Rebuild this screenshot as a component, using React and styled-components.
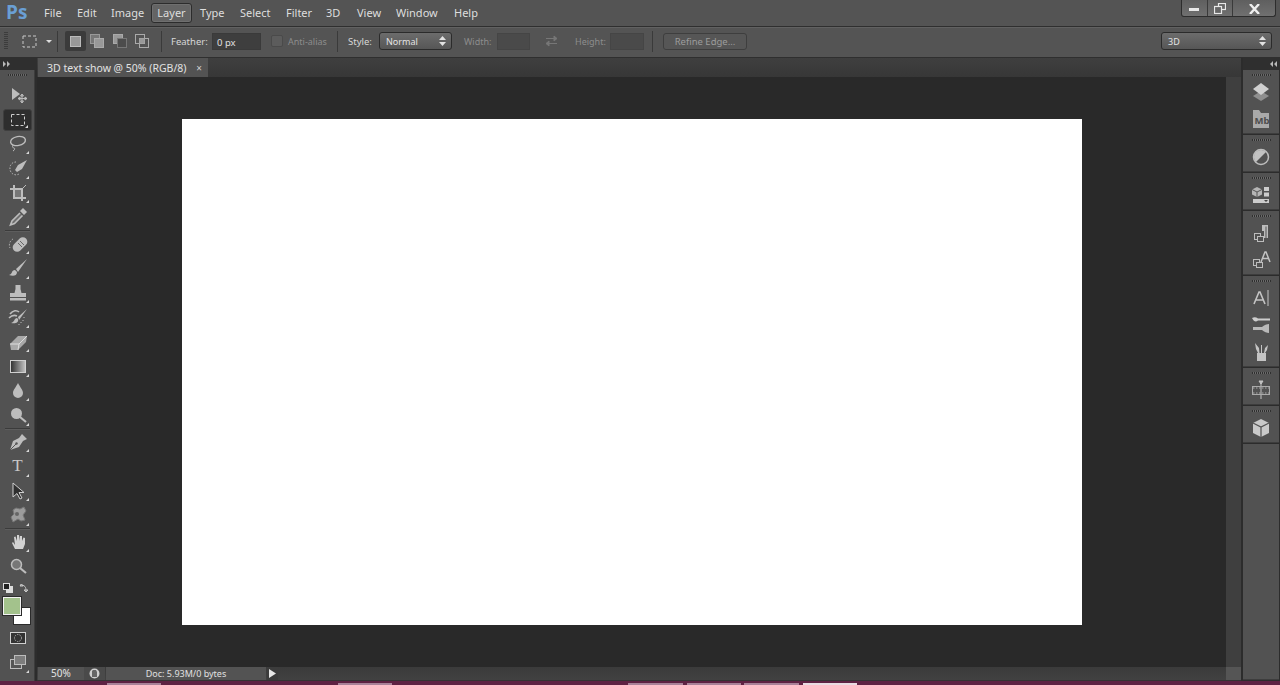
import React from 'react';
import styled, { createGlobalStyle } from 'styled-components';

const Global = createGlobalStyle`
  html, body { margin: 0; padding: 0; height: 100%; overflow: hidden; background: #535353; }
  #root { height: 100%; }
  * { box-sizing: border-box; }
`;
const Shell = styled.div`
  width: 1280px; height: 685px; display: grid; grid-template-rows: 27px 31px 1fr 4px;
  font-family: "Noto Sans", "Open Sans", sans-serif; font-size: 11px; color: #d6d6d6; background: #535353;
  overflow: hidden;
`;
const MenuBar = styled.header`
  display: flex; align-items: flex-start; background: #545454; border-bottom: 1px solid #2f2f2f; padding-left: 6px;
`;
const Logo = styled.div`
  width: 38px; height: 26px; font: bold 19px/25px "Open Sans", sans-serif; color: #6a9fd4;
`;
const MenuItem = styled.div`
  width: ${p => p.$w}px; height: 26px; line-height: 25px; font-size: 11px; color: #dedede; flex: none;
`;
const ActiveMenu = styled.div`
  width: 41px; height: 20px; margin: 3px 8px 0 -7px; line-height: 18px; text-align: center; font-size: 11px; color: #dedede; flex: none;
  background: #646464; border: 1px solid #2c2c2c; border-radius: 3px; box-shadow: inset 0 0 0 1px #6f6f6f;
`;
const WinControls = styled.div`
  margin-left: auto; margin-right: 4px; display: flex; height: 17px; width: 95px;
  border: 1px solid #2d2d2d; border-top: 0; border-radius: 0 0 3px 3px; overflow: hidden;
  background: linear-gradient(#5f5f5f, #707070);
`;
const WinButton = styled.div`
  flex: ${p => p.$grow || 1}; display: flex; align-items: center; justify-content: center; padding-top: 1px;
  & + & { border-left: 1px solid #3a3a3a; }
`;
const OptionsBar = styled.div`
  display: flex; align-items: center; background: #545454; border-bottom: 1px solid #2f2f2f; padding-bottom: 2px;
  box-shadow: inset 0 1px 0 #616161;
`;
const Grip = styled.div`
  width: 4px; height: 18px; margin-left: 4px; flex: none;
  background: repeating-linear-gradient(#3c3c3c 0 1px, transparent 1px 2px);
`;
const Slot = styled.div`
  flex: none; margin-left: ${p => p.$l}px; display: flex; align-items: center; justify-content: center;
`;
const VSep = styled.div`
  flex: none; width: 1px; height: 21px; background: #3a3a3a; margin-left: ${p => p.$l}px;
`;
const ModeBtn = styled.div`
  flex: none; width: ${p => p.$on ? 21 : 14}px; height: 20px; margin-left: ${p => p.$l}px; display: flex; align-items: center; justify-content: center;
  background: ${p => p.$on ? '#3b3b3b' : 'transparent'}; border-radius: 2px;
`;
const Label = styled.span`
  flex: none; margin-left: ${p => p.$l}px; font-size: ${p => p.$dim ? 9 : 9.5}px; color: ${p => p.$dim ? '#8d8d8d' : '#d8d8d8'};
  width: ${p => p.$w}px; white-space: nowrap;
`;
const Field = styled.div`
  flex: none; margin-left: ${p => p.$l}px; width: ${p => p.$w}px; height: 17px; padding-left: 4px; line-height: 17px; font-size: 9.5px; color: #e0e0e0;
  background: ${p => p.$dim ? '#4a4a4a' : '#3e3e3e'}; border: 1px solid ${p => p.$dim ? '#454545' : '#3a3a3a'};
`;
const Check = styled.div`
  flex: none; margin-left: ${p => p.$l}px; width: 12px; height: 12px; background: #5c5c5c; border: 1px solid #4a4a4a; border-radius: 2px;
`;
const Select = styled.div`
  flex: none; margin-left: ${p => p.$l}px; width: ${p => p.$w}px; height: 18px; padding: 0 5px 0 6px; display: flex; align-items: center; justify-content: space-between;
  background: linear-gradient(#6c6c6c, #565656); border: 1px solid #2b2b2b; border-radius: 3px; font-size: 9px; color: #e4e4e4;
`;
const RefineButton = styled.div`
  flex: none; margin-left: 10px; width: 84px; height: 17px; line-height: 15px; text-align: center; font-size: 9.5px; color: #9c9c9c;
  background: #565656; border: 1px solid #3e3e3e; border-radius: 3px;
`;
const Body = styled.div`
  display: flex; min-height: 0;
`;
const ToolColumn = styled.aside`
  width: 37px; flex: none; display: flex; flex-direction: column; background: #2c2c2c;
`;
const CollapseHeader = styled.div`
  height: 12px; flex: none; display: flex; align-items: center; justify-content: ${p => p.$right ? 'flex-end' : 'flex-start'};
  padding: 0 3px; background: #2f2f2f; color: #b0b0b0;
`;
const ToolPanel = styled.div`
  flex: 1; width: 35px; background: #525252; padding: 0 2px 0 3px; display: flex; flex-direction: column;
  border-right: 1px solid #3c3c3c;
`;
const GripRow = styled.div`
  height: ${p => p.$h}px; flex: none; display: flex; justify-content: center; padding-top: 4px;
  &::before { content: ""; width: 19px; height: 2px; background: repeating-linear-gradient(90deg, #2f2f2f 0 1px, #6a6a6a 1px 2px); }
`;
const Tool = styled.div`
  position: relative; height: ${p => p.$h || 24.5}px; flex: none; display: flex; align-items: center; justify-content: center;
  ${p => p.$on && 'background: #2e2e2e; border-radius: 3px; border: 1px solid #3f3f3f; margin: 1px 0; height: 22px;'}
  ${p => p.$more && `&::after { content: ""; position: absolute; right: 3px; bottom: 2px; width: 0; height: 0; border-left: 3px solid transparent; border-bottom: 3px solid #d8d8d8; }`}
`;
const ToolSep = styled.div`
  height: 2px; flex: none; margin: 0 2px; background: #3b3b3b; border-bottom: 1px solid #5d5d5d;
`;
const ColorBlock = styled.div`
  height: 47px; flex: none; position: relative;
`;
const Fg = styled.div`
  position: absolute; left: 0; top: 18px; width: 18px; height: 18px; background: #a3c28c; border: 1px solid #f2f2f2; outline: 1px solid #2b2b2b; z-index: 1;
`;
const Bg = styled.div`
  position: absolute; left: 10px; top: 28px; width: 18px; height: 18px; background: #fff; border: 1px solid #2b2b2b;
`;
const SmallSwatch = styled.div`
  position: absolute; left: 0; top: 4px;
`;
const Center = styled.main`
  flex: 1; min-width: 0; display: flex; flex-direction: column;
`;
const TabBar = styled.div`
  height: 19px; flex: none; display: flex; background: linear-gradient(#3f3f3f, #373737);
`;
const DocTab = styled.div`
  width: 170px; margin-left: 1px; display: flex; align-items: center; justify-content: space-between; padding: 0 6px 0 9px; background: #535353; font-size: 10.5px; color: #e2e2e2;
`;
const TabClose = styled.span`
  font-size: 10px; color: #d0d0d0; line-height: 1;
`;
const Workspace = styled.div`
  flex: 1; min-height: 0; display: flex;
`;
const Canvas = styled.div`
  flex: 1; display: flex; align-items: center; justify-content: center; background: #292929; padding-left: 1px;
`;
const Doc = styled.div`
  width: 900px; height: 506px; background: #fff;
`;
const VScroll = styled.div`
  width: 15px; flex: none; background: #3f3f3f;
`;
const BottomRow = styled.div`
  height: 14px; flex: none; display: flex; background: linear-gradient(#3b3b3b, #414141); border-bottom: 1px solid #333;
`;
const ZoomBox = styled.div`
  width: 46px; padding-left: 13px; line-height: 13px; font-size: 10px; color: #e4e4e4; background: #535353; flex: none; margin-left: 1px;
`;
const DocIcon = styled.div`
  width: 21px; flex: none; display: flex; align-items: center; justify-content: center; background: #4a4a4a;
`;
const DocInfo = styled.div`
  width: 160px; flex: none; margin-left: 1px; line-height: 13px; text-align: center; font-size: 9px; color: #e0e0e0; background: #535353;
`;
const StatusArrow = styled.div`
  width: 11px; flex: none; margin-left: 1px; display: flex; align-items: center; justify-content: center; background: #3c3c3c;
`;
const Corner = styled.div`
  width: 15px; margin-left: auto; background: #555;
`;
const RightDock = styled.aside`
  width: 39px; flex: none; display: flex; flex-direction: column; background: #2c2c2c; padding-left: 2px;
`;
const DockGroup = styled.div`
  flex: ${p => p.$fill ? 1 : 'none'}; display: flex; flex-direction: column; background: #525252; width: 36px; padding-bottom: 1px; margin-bottom: 1px;
  border-bottom: 1px solid #3d3d3d;
`;
const DockItem = styled.div`
  height: 27px; flex: none; display: flex; align-items: center; justify-content: center;
`;
const Taskbar = styled.footer`
  display: flex; align-items: flex-end; background: #5e2243;
`;
const TaskTab = styled.div`
  flex: none; height: 2px; width: ${p => p.$w || 54}px; margin-left: ${p => p.$l}px; background: ${p => p.$on ? '#e9dbe2' : '#a98299'};
`;
const SerifGlyph = styled.span`
  font: 17px "Liberation Serif", serif; color: #c8c8c8;
`;

const G = '#bdbdbd';
const Ico = ({ size = 22, children, vb }) => (
  <svg width={size} height={size} viewBox={vb || `0 0 ${size} ${size}`} fill="none">{children}</svg>
);

const tools = {
  move: <Ico><path d="M5 4v12l8-6z" fill={G}/><path d="M15 10v9M11 14.5h9M15 10l-1.5 2h3zM15 19l-1.5-2h3zM11 14.5l2-1.5v3zM20 14.5l-2-1.5v3z" stroke={G}/></Ico>,
  marquee: <Ico><rect x="4.5" y="5.5" width="13" height="11" stroke="#cfcfcf" strokeDasharray="3 2"/></Ico>,
  lasso: <Ico><ellipse cx="11" cy="8" rx="7.5" ry="4.5" transform="rotate(-10 11 8)" stroke={G} strokeWidth="1.4"/><path d="M6 12c-1 2 0 3 1 3s1 2-1 3" stroke={G}/></Ico>,
  quick: <Ico><path d="M9 5a6 6 0 0 0-6 7 6 6 0 0 0 9 5" stroke={G} strokeDasharray="1.5 1.5"/><path d="M20 3l-9 5-3 5 2 2 5-3z" fill={G}/></Ico>,
  crop: <Ico><path d="M7 3v13h12M3 7h12v12" stroke={G} strokeWidth="2"/><path d="M11 11l8-8" stroke={G}/><rect x="8" y="8" width="6" height="7" fill="#777"/></Ico>,
  eyedrop: <Ico><path d="M16 2l4 4-3 3-4-4z" fill={G}/><path d="M13 7l-8 8-1.5 4 4-1.500 8-8" fill="#707070" stroke={G} strokeWidth="1.6"/></Ico>,
  heal: <Ico><path d="M6 6a7 7 0 0 0-3 9" stroke={G} strokeDasharray="1.5 1.5"/><rect x="4.500" y="7" width="17" height="9" rx="4.500" transform="rotate(-45 13 11.500)" fill={G}/><path d="M11 10l4 4M13 8l4 4" stroke="#666"/></Ico>,
  brush: <Ico><path d="M20 2L9 12l2 3z" fill={G}/><path d="M8 13c-4 0-2 4-6 5 4 1.500 8 1 8-3z" fill={G}/></Ico>,
  stamp: <Ico><path d="M8.500 3h5v4l1 4h4.500v4H3v-4h4.500l1-4z" fill={G}/><rect x="3" y="16" width="16" height="2.500" fill={G}/></Ico>,
  history: <Ico><path d="M3 8c3-4 7-4 9-2M2 12c3-3 6-3 8-2" stroke={G} strokeWidth="1.600"/><path d="M20 3l-9 8 1 3z" fill={G}/><path d="M10 12c-3 0-2 4-6 5 4 1 8 0 7-4z" fill={G}/><path d="M17 11v1M16 14v1M14 16v1M12 18v1" stroke={G}/></Ico>,
  eraser: <Ico><path d="M3 13l8-8h9l-1 6-8 8H4z" fill="#a9a9a9"/><path d="M3 13h9l8-8M12 13l-1 6" stroke="#ddd"/></Ico>,
  gradient: <Ico><defs><linearGradient id="gr" x1="0" x2="1"><stop offset="0" stopColor="#2f2f2f"/><stop offset="1" stopColor="#c5c5c5"/></linearGradient></defs><rect x="3.500" y="5.500" width="15" height="12" fill="url(#gr)" stroke="#d0d0d0"/></Ico>,
  blur: <Ico><path d="M11 3c2 4 5 7 5 10a5 5 0 0 1-10 0c0-3 3-6 5-10z" fill={G}/></Ico>,
  dodge: <Ico><circle cx="9.500" cy="9.500" r="5.500" fill={G}/><path d="M13 13l6 5" stroke={G} strokeWidth="2.200"/></Ico>,
  pen: <Ico><path d="M15 3l5 5-4 2-4 6-9 3 3-9 6-3z" fill={G}/><path d="M3 19l6-6" stroke="#555"/><circle cx="9.500" cy="12.500" r="1.200" fill="#555"/></Ico>,
  path: <Ico><path d="M6 3v14l4-3.500 3 5.500 2-1-3-5.500h5z" fill="#2f2f2f" stroke="#cfcfcf"/></Ico>,
  shape: <Ico><path d="M9 4l4 1 4-2 2 4-3 4 2 5-4 1-3-2-5 3-2-5 3-3-1-4z" fill="#9c9c9c" stroke="#777"/><circle cx="10" cy="10" r="2" fill="#666"/></Ico>,
  hand: <Ico><path d="M5 12l3 6h8l2-5V7l-1.500-.5L15 10V5h-2v5l-1-6h-2v6L8.500 5.500 7 6l1 8-2-3z" fill="#d2d2d2"/></Ico>,
  zoom: <Ico><circle cx="9.500" cy="9.500" r="5" fill="#777" stroke={G} strokeWidth="1.500"/><path d="M13 13l6 5" stroke={G} strokeWidth="2.200"/></Ico>,
  mask: <Ico><rect x="3.500" y="5.500" width="15" height="11" fill="#333" stroke="#d0d0d0"/><circle cx="11" cy="11" r="3.500" stroke="#aaa" strokeDasharray="1.500 1"/></Ico>,
  screen: <Ico><rect x="3.500" y="8.500" width="11" height="9" fill="#555" stroke={G}/><rect x="7.500" y="4.500" width="11" height="9" fill="#7d7d7d" stroke={G}/></Ico>,
};

const dock = {
  layers: <Ico size={20}><path d="M10 9l8 5-8 5-8-5z" fill="#8f8f8f"/><path d="M10 1l8 6-8 6-8-6z" fill="#d0d0d0"/></Ico>,
  mb: <Ico size={20}><path d="M2 1h6l2 3h8v15H2z" fill="#a9a9a9"/><text x="3.500" y="15" fontSize="9.500" fontWeight="700" fill="#4d4d4d" fontFamily="Noto Sans, sans-serif">Mb</text></Ico>,
  adjust: <Ico size={20}><circle cx="10" cy="10" r="7.500" stroke="#bdbdbd" strokeWidth="1.500"/><path d="M15 5A7 7 0 0 0 5 15z" fill="#c2c2c2"/></Ico>,
  d3: <Ico size={20}><path d="M6 2l5 2.500v5L6 12 1 9.500v-5z" fill="#b5b5b5"/><path d="M1 4.500L6 7l5-2.500M6 7v5" stroke="#555"/><rect x="13" y="2" width="5" height="4" fill="#ccc"/><rect x="13" y="7.500" width="5" height="4" fill="#ccc"/><rect x="2" y="14" width="16" height="4" fill="#ccc"/><path d="M13 15h4l-2 2z" fill="#444"/></Ico>,
  para: <Ico size={20}><path d="M11 2h6v13h-1.500V3.500h-1V15H13V8h-2z" fill="#bdbdbd"/><rect x="3.500" y="10.500" width="6" height="6" stroke="#bdbdbd"/><rect x="6.500" y="13.500" width="6" height="5" fill="#525252" stroke="#bdbdbd"/></Ico>,
  charStyle: <Ico size={20}><rect x="2.500" y="9.500" width="6" height="6" stroke="#bdbdbd"/><rect x="5.500" y="12.500" width="6" height="5" fill="#525252" stroke="#bdbdbd"/><path d="M10 12l4-10h1l4 10M11.500 8.500h6" stroke="#c4c4c4" strokeWidth="1.500"/></Ico>,
  charA: <Ico size={20}><path d="M3 16L8 4h1l5 12M5 12h7" stroke="#c4c4c4" strokeWidth="1.600"/><path d="M17 2v16" stroke="#c4c4c4"/></Ico>,
  brushes: <Ico size={20}><path d="M1 3c2-1 4-1 6 .5l12 0v2H7C5 7 3 7 1 3z" fill="#cdcdcd"/><path d="M2 12h9c2-2 5-3 7-3v9c-2 0-5-1-7-3H2z" fill="#b9b9b9"/></Ico>,
  presets: <Ico size={20}><rect x="6" y="11" width="9" height="8" fill="#c4c4c4"/><path d="M4 1l4 5 .5 5H7L5 7zM10 3h1v8h-1zM17 3l-1 5-2 3h-1l1-5z" fill="#c4c4c4"/></Ico>,
  timeline: <Ico size={20}><path d="M8 1h4l-2 3zM10 3v16" stroke="#c4c4c4" fill="#c4c4c4"/><rect x="1.500" y="6.500" width="17" height="8" stroke="#aaa"/><path d="M2 8h16M2 13h16" stroke="#aaa" strokeDasharray="1.500 1.500"/></Ico>,
  cube: <Ico size={20}><path d="M10 1l8 4v10l-8 4-8-4V5z" fill="#c9c9c9"/><path d="M2 5l8 4 8-4M10 9v10" stroke="#525252" strokeWidth="1.200"/></Ico>,
};

const Updown = () => (
  <svg width="7" height="10" viewBox="0 0 7 10"><path d="M3.500 0L7 4H0zM3.500 10L0 6h7z" fill="#e2e2e2"/></svg>
);

const Arrows = ({ flip }) => (
  <svg width="8" height="6" viewBox="0 0 8 6" style={flip ? { transform: 'scaleX(-1)' } : undefined}>
    <path d="M0 0l3 3-3 3zM4 0l3 3-3 3z" fill="#b8b8b8"/>
  </svg>
);

const menus = [['File', 33], ['Edit', 34], ['Image', 47]];
const menus2 = [['Type', 40], ['Select', 46], ['Filter', 40], ['3D', 31], ['View', 39], ['Window', 58], ['Help', 30]];

export default function App() {
  return (
    <Shell>
      <Global />
      <MenuBar>
        <Logo>Ps</Logo>
        {menus.map(([t, w]) => <MenuItem key={t} $w={w}>{t}</MenuItem>)}
        <ActiveMenu>Layer</ActiveMenu>
        {menus2.map(([t, w]) => <MenuItem key={t} $w={w}>{t}</MenuItem>)}
        <WinControls>
          <WinButton>
            <svg width="10" height="4"><rect y="1" width="10" height="3" fill="#e8e8e8"/></svg>
          </WinButton>
          <WinButton>
            <svg width="12" height="11" viewBox="0 0 12 11" fill="none"><rect x="4.500" y=".5" width="7" height="6" stroke="#e8e8e8" strokeWidth="1.200"/><rect x=".5" y="3.500" width="7" height="7" fill="#666" stroke="#e8e8e8" strokeWidth="1.200"/></svg>
          </WinButton>
          <WinButton $grow={1.7}>
            <svg width="11" height="10" viewBox="0 0 11 10"><path d="M1 0l9 10M10 0L1 10" stroke="#eee" strokeWidth="2.400"/></svg>
          </WinButton>
        </WinControls>
      </MenuBar>

      <OptionsBar>
        <Grip />
        <Slot $l={14}><svg width="15" height="13" fill="none"><rect x="1" y="1" width="13" height="11" stroke="#c8c8c8" strokeDasharray="3 2"/></svg></Slot>
        <Slot $l={9}><svg width="6" height="3"><path d="M0 0h6L3 3z" fill="#ddd"/></svg></Slot>
        <VSep $l={5} />
        <ModeBtn $on $l={7}><svg width="11" height="11"><rect x=".5" y=".5" width="10" height="10" fill="#999" stroke="#bbb"/></svg></ModeBtn>
        <ModeBtn $l={4}><svg width="14" height="14" fill="none"><rect x=".5" y=".5" width="9" height="9" fill="#777" stroke="#999"/><rect x="4.500" y="4.500" width="9" height="9" fill="#999" stroke="#aaa"/></svg></ModeBtn>
        <ModeBtn $l={9}><svg width="14" height="14" fill="none"><rect x=".5" y=".5" width="9" height="9" fill="#999" stroke="#aaa"/><rect x="4.500" y="4.500" width="9" height="9" fill="#4c4c4c" stroke="#777"/></svg></ModeBtn>
        <ModeBtn $l={8}><svg width="14" height="14" fill="none"><rect x=".5" y=".5" width="9" height="9" stroke="#aaa"/><rect x="4.500" y="4.500" width="9" height="9" stroke="#aaa"/><rect x="4.500" y="4.500" width="5" height="5" fill="#999"/></svg></ModeBtn>
        <VSep $l={12} />
        <Label $l={9} $w={41}>Feather:</Label>
        <Field $w={49}>0 px</Field>
        <Check $l={10} />
        <Label $l={5} $dim $w={49}>Anti-alias</Label>
        <VSep />
        <Label $l={10} $w={31}>Style:</Label>
        <Select $w={73}>Normal<Updown /></Select>
        <Label $l={12} $dim $w={33}>Width:</Label>
        <Field $dim $w={33} />
        <Slot $l={15}><svg width="13" height="12" fill="none"><path d="M1 3.500h8M9 1l3 2.500L9 6zM12 8.500H4M4 6L1 8.500 4 11z" fill="#777" stroke="#777"/></svg></Slot>
        <Label $l={17} $dim $w={35}>Height:</Label>
        <Field $dim $w={34} />
        <VSep $l={8} />
        <RefineButton>Refine Edge...</RefineButton>
        <Select $l={414} $w={111}>3D<Updown /></Select>
      </OptionsBar>

      <Body>
        <ToolColumn>
          <CollapseHeader><Arrows /></CollapseHeader>
          <ToolPanel>
            <GripRow $h={13} />
            <Tool>{tools.move}</Tool>
            <Tool $on $more>{tools.marquee}</Tool>
            <Tool $more>{tools.lasso}</Tool>
            <Tool $more>{tools.quick}</Tool>
            <Tool $more>{tools.crop}</Tool>
            <Tool $more>{tools.eyedrop}</Tool>
            <ToolSep />
            <Tool $more>{tools.heal}</Tool>
            <Tool $more>{tools.brush}</Tool>
            <Tool $more>{tools.stamp}</Tool>
            <Tool $more>{tools.history}</Tool>
            <Tool $more>{tools.eraser}</Tool>
            <Tool $more>{tools.gradient}</Tool>
            <Tool $more>{tools.blur}</Tool>
            <Tool $more>{tools.dodge}</Tool>
            <ToolSep />
            <Tool $more>{tools.pen}</Tool>
            <Tool $more><SerifGlyph>T</SerifGlyph></Tool>
            <Tool $more>{tools.path}</Tool>
            <Tool $more>{tools.shape}</Tool>
            <ToolSep />
            <Tool $more>{tools.hand}</Tool>
            <Tool>{tools.zoom}</Tool>
            <ColorBlock>
              <SmallSwatch>
                <svg width="30" height="12" fill="none"><rect x="3.500" y="3.500" width="6" height="6" fill="#ddd" stroke="#ddd"/><rect x=".5" y=".5" width="6" height="6" fill="#222" stroke="#ddd"/><path d="M17 3h3l-1.500-2zM17 2c5 0 6 2 6 6M23 9l-2-2h4z" fill="none" stroke="#c8c8c8"/></svg>
              </SmallSwatch>
              <Fg />
              <Bg />
            </ColorBlock>
            <Tool>{tools.mask}</Tool>
            <Tool $more>{tools.screen}</Tool>
          </ToolPanel>
        </ToolColumn>

        <Center>
          <TabBar>
            <DocTab>3D text show @ 50% (RGB/8)<TabClose>×</TabClose></DocTab>
          </TabBar>
          <Workspace>
            <Canvas><Doc /></Canvas>
            <VScroll />
          </Workspace>
          <BottomRow>
            <ZoomBox>50%</ZoomBox>
            <DocIcon>
              <svg width="11" height="11" fill="none"><circle cx="5.500" cy="5.500" r="5" fill="#cfcfcf"/><path d="M4 2h3l1 2v5H3V3z" fill="#666"/></svg>
            </DocIcon>
            <DocInfo>Doc: 5.93M/0 bytes</DocInfo>
            <StatusArrow><svg width="7" height="9"><path d="M0 0l7 4.500L0 9z" fill="#e8e8e8"/></svg></StatusArrow>
            <Corner />
          </BottomRow>
        </Center>

        <RightDock>
          <CollapseHeader $right><Arrows flip /></CollapseHeader>
          <DockGroup>
            <GripRow $h={8} />
            <DockItem>{dock.layers}</DockItem>
            <DockItem>{dock.mb}</DockItem>
          </DockGroup>
          <DockGroup><GripRow $h={8} /><DockItem>{dock.adjust}</DockItem></DockGroup>
          <DockGroup><GripRow $h={8} /><DockItem>{dock.d3}</DockItem></DockGroup>
          <DockGroup>
            <GripRow $h={8} />
            <DockItem>{dock.para}</DockItem>
            <DockItem>{dock.charStyle}</DockItem>
          </DockGroup>
          <DockGroup>
            <GripRow $h={8} />
            <DockItem>{dock.charA}</DockItem>
            <DockItem>{dock.brushes}</DockItem>
            <DockItem>{dock.presets}</DockItem>
          </DockGroup>
          <DockGroup><GripRow $h={8} /><DockItem>{dock.timeline}</DockItem></DockGroup>
          <DockGroup><GripRow $h={8} /><DockItem>{dock.cube}</DockItem></DockGroup>
          <DockGroup $fill />
        </RightDock>
      </Body>

      <Taskbar>
        <TaskTab $l={107} />
        <TaskTab $l={177} />
        <TaskTab $l={236} $w={55} />
        <TaskTab $l={4} />
        <TaskTab $l={3} $w={55} />
        <TaskTab $l={4} $on />
      </Taskbar>
    </Shell>
  );
}
